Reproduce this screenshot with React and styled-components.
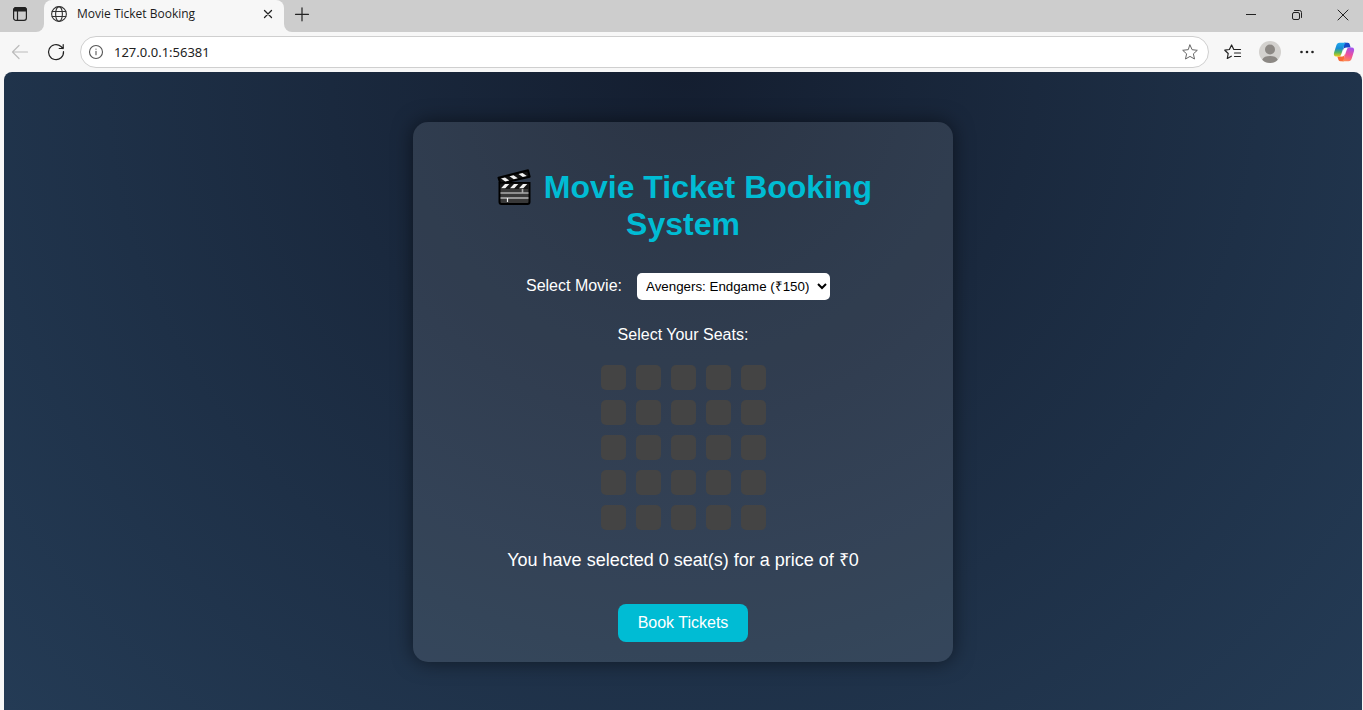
import React, { useState } from "react";
import styled, { createGlobalStyle } from "styled-components";

const GlobalStyle = createGlobalStyle`
  *, *::before, *::after { box-sizing: border-box; }
  body {
    margin: 0;
    background: #f7f7f7;
    font-family: "Liberation Sans", Arial, sans-serif;
  }
  button, input, select { font-family: inherit; }
`;

const Window = styled.div`
  display: flex;
  flex-direction: column;
  min-height: 100vh;
`;

const TabStrip = styled.header`
  display: flex;
  height: 32px;
  color: #111;
`;

const StripStart = styled.div`
  display: flex;
  align-items: center;
  width: 44px;
  padding: 0 0 4px 12px;
  background: #cdcdcd;
  border-bottom-right-radius: 8px;
`;

const StripEnd = styled.div`
  display: flex;
  flex: 1;
  align-items: center;
  justify-content: space-between;
  padding: 0 0 2px 10px;
  background: #cdcdcd;
  border-bottom-left-radius: 8px;
`;

const TabSlot = styled.div`
  width: 240px;
  background: linear-gradient(#cdcdcd 50%, #f7f7f7 50%);
`;

const Tab = styled.div`
  display: flex;
  align-items: center;
  gap: 10px;
  height: 32px;
  padding: 0 8px 4px 7px;
  background: #f7f7f7;
  border-radius: 8px 8px 0 0;
`;

const TabTitle = styled.span`
  flex: 1;
  font: 12px/16px "Open Sans", "Noto Sans", sans-serif;
  color: #1b1b1b;
`;

const IconButton = styled.button`
  display: inline-flex;
  align-items: center;
  justify-content: center;
  flex: none;
  width: ${(p) => p.$size || 16}px;
  height: ${(p) => p.$size || 16}px;
  padding: 0;
  border: 0;
  background: none;
  color: ${(p) => p.$color || "#222"};
`;

const WindowControls = styled.div`
  display: flex;
  gap: 30px;
  padding-right: 12px;
`;

const Toolbar = styled.div`
  display: flex;
  align-items: center;
  height: 40px;
  padding: 0 8px 0 10px;
  gap: 16px;
`;

const AddressBar = styled.div`
  display: flex;
  flex: 1;
  align-items: center;
  gap: 10px;
  height: 32px;
  min-width: 0;
  margin: 0 -2px;
  padding: 0 10px 0 7px;
  border: 1px solid #cfcfcf;
  border-radius: 16px;
  background: #fff;
`;

const AddressInput = styled.input`
  flex: 1;
  min-width: 0;
  padding: 0;
  border: 0;
  outline: 0;
  background: none;
  color: #222;
  font: 13px/18px "Noto Sans", "Open Sans", sans-serif;
`;

const Page = styled.main`
  flex: 1;
  margin: 0 1px 0 4px;
  padding: 50px 16px 40px;
  border-radius: 8px 8px 0 0;
  background: radial-gradient(circle at top, #141e30, #243b55);
  color: #fff;
`;

const Card = styled.form`
  display: flex;
  flex-direction: column;
  align-items: center;
  max-width: 540px;
  margin: 0 auto;
  padding: 20px;
  border-radius: 15px;
  background: rgba(255, 255, 255, 0.1);
  box-shadow: 0 0 20px rgba(0, 0, 0, 0.5);
  text-align: center;
`;

const Title = styled.h1`
  max-width: 400px;
  margin: 27px 0 30px;
  color: #00bcd4;
  font-size: 32px;
  line-height: 37px;

  svg {
    margin: 0 3px;
    vertical-align: -8px;
  }
`;

const MovieField = styled.div`
  display: flex;
  align-items: flex-start;
  gap: 15px;
  padding-right: 10px;
  font-size: 16px;
  line-height: 25px;
`;

const MovieSelect = styled.select`
  width: 193px;
  height: 27px;
  padding: 5px;
  border: 0;
  border-radius: 5px;
  background: #fff;
  color: #000;
`;

const SeatGroup = styled.fieldset`
  display: flex;
  flex-direction: column;
  align-items: center;
  min-width: 0;
  margin: 26px 0 20px;
  padding: 0;
  border: 0;
`;

const SeatLegend = styled.legend`
  margin: 0 auto 21px;
  padding: 0;
  font-size: 16px;
  line-height: 18px;
`;

const SeatGrid = styled.div`
  display: grid;
  grid-template-columns: repeat(5, 25px);
  gap: 10px;
`;

const Seat = styled.input`
  appearance: none;
  width: 25px;
  height: 25px;
  margin: 0;
  border-radius: 5px;
  background: #444;
  cursor: pointer;

  &:checked { background: #00bcd4; }
`;

const Summary = styled.p`
  margin: 0 0 34px;
  font-size: 18px;
  line-height: 20px;
`;

const BookButton = styled.button`
  padding: 10px 20px;
  border: 0;
  border-radius: 8px;
  background: #00bcd4;
  color: #fff;
  font-size: 16px;
  line-height: 18px;
  cursor: pointer;
`;

const Line = ({ size = 16, width = 1.1, children, ...rest }) => (
  <svg width={size} height={size} viewBox={`0 0 ${size} ${size}`} fill="none" stroke="currentColor"
    strokeWidth={width} strokeLinecap="round" strokeLinejoin="round" aria-hidden="true" {...rest}>
    {children}
  </svg>
);

const STAR = "M8 1 L10.1 5.7 L15.3 6.3 L11.4 9.8 L12.5 15 L8 12.4 L3.5 15 L4.6 9.8 L.7 6.3 L5.9 5.7 Z";

const TabActionsIcon = () => (
  <Line width={1.2}>
    <rect x="1.6" y="1.6" width="12.8" height="12.8" rx="2.4" />
    <path d="M1.600 5V4A2.400 2.400 0 0 1 4 1.600h8A2.400 2.400 0 0 1 14.400 4v1z" fill="currentColor" />
    <path d="M5.500 5v9" />
  </Line>
);

const GlobeIcon = () => (
  <Line width={1.1} color="#333">
    <circle cx="8" cy="8" r="7.4" />
    <ellipse cx="8" cy="8" rx="3.4" ry="7.4" />
    <path d="M1.2 5.5h13.6M1.2 10.5h13.6" />
  </Line>
);

const ClapperIcon = () => (
  <svg width="35" height="37" viewBox="0 0 35 37" role="img" aria-label="Clapper board">
    <path d="M2.500 14h30v19a2 2 0 0 1-2 2h-26a2 2 0 0 1-2-2z" fill="#383838" stroke="#000" strokeWidth="2" />
    <path d="M1.500 8.800 31 1.200l1.700 6.500L3.300 14.500z" fill="#151515" stroke="#000" strokeWidth="2" strokeLinejoin="round" />
    <path d="M4 9.500l4-1 4.300 3-4 1zM12.500 7.200l4-1 4.300 3-4 1zM21.500 5l4-1 4.300 3-4 1z" fill="#f2f2f2" />
    <path d="M3.500 14.500h28V20h-28z" fill="#151515" />
    <path d="M8 15h4.300l-4 4.200H4zM17 15h4.300l-4 4.200H13zM26 15h4.300l-4 4.200H22z" fill="#f2f2f2" />
    <path d="M3.500 24h28M25.500 20v4" stroke="#aaa" strokeWidth="1.600" />
    <path d="M3.500 29h28M10.500 29v4" stroke="#f4f4f4" strokeWidth="1.200" />
  </svg>
);

const CopilotIcon = () => (
  <svg width="24" height="22" viewBox="0 0 24 22" aria-hidden="true">
    <defs>
      <linearGradient id="cool" x1="0" y1="0" x2="0" y2="1">
        <stop offset="0" stopColor="#22a9ee" />
        <stop offset=".4" stopColor="#168bd5" />
        <stop offset=".7" stopColor="#57b65f" />
        <stop offset="1" stopColor="#f2cf10" />
      </linearGradient>
      <linearGradient id="warm" x1=".6" y1="0" x2=".3" y2="1">
        <stop offset="0" stopColor="#a453ed" />
        <stop offset=".5" stopColor="#ee4f9b" />
        <stop offset="1" stopColor="#ff8d50" />
      </linearGradient>
    </defs>
    <path d="M12 1h4c1.600 0 2 1 2.400 2.300l.8 2.900h-4.500c-2 0-3 1.300-3.500 3z" fill="#1748c7" />
    <path d="M12 21H8c-1.600 0-2-1-2.400-2.300l-.9-2.900h4.600c2 0 3-1.300 3.500-3z" fill="#f86a35" />
    <path d="M7 1h8c-1.800 0-2.300 1.400-2.800 3L9 13.400c-.6 1.800-1.400 2.600-3.100 2.600H3.600C1 16 .5 13.800 1.200 11.500L3.600 4C4.300 2 5.200 1 7 1z" fill="url(#cool)" />
    <path d="M17 21H9c1.800 0 2.300-1.400 2.800-3L15 8.600C15.600 6.800 16.400 6 18.100 6h2.300c2.600 0 3.100 2.200 2.400 4.500L20.400 18c-.7 2-1.600 3-3.400 3z" fill="url(#warm)" />
    <path d="M12.700 6.500h2.800L11.300 15.500H8.700z" fill="#fff" />
  </svg>
);

const AvatarIcon = () => (
  <svg width="22" height="22" viewBox="0 0 22 22" aria-hidden="true">
    <circle cx="11" cy="11" r="11" fill="#d3d1ce" />
    <circle cx="11" cy="8.500" r="5" fill="#8c8884" />
    <path d="M3.200 18.700C4.500 16 7 15 11 15s6.500 1 7.800 3.700A11 11 0 0 1 11 22a11 11 0 0 1-7.800-3.300z" fill="#8c8884" />
  </svg>
);

const movies = [
  { name: "Avengers: Endgame", price: 150 },
  { name: "Joker", price: 200 },
  { name: "Toy Story 4", price: 180 },
];

function BrowserChrome() {
  return (
    <>
      <TabStrip>
        <StripStart>
          <IconButton aria-label="Tab actions"><TabActionsIcon /></IconButton>
        </StripStart>
        <TabSlot>
          <Tab>
            <GlobeIcon />
            <TabTitle>Movie Ticket Booking</TabTitle>
            <IconButton aria-label="Close tab">
              <Line width={1.3}><path d="M4.500 4.500l7 7M11.500 4.500l-7 7" /></Line>
            </IconButton>
          </Tab>
        </TabSlot>
        <StripEnd>
          <IconButton aria-label="New tab">
            <Line width={1.2}><path d="M8 .8v13M1.500 7.300h13" /></Line>
          </IconButton>
          <WindowControls>
            <IconButton aria-label="Minimize">
              <Line width={1} strokeLinecap="butt"><path d="M3 7.500h10" /></Line>
            </IconButton>
            <IconButton aria-label="Restore">
              <Line width={1}>
                <rect x="3.500" y="5.500" width="7" height="7" rx="1.500" />
                <path d="M5.500 3.500h5a2 2 0 0 1 2 2v5" />
              </Line>
            </IconButton>
            <IconButton aria-label="Close">
              <Line width={1}><path d="M3 3l10 10M13 3L3 13" /></Line>
            </IconButton>
          </WindowControls>
        </StripEnd>
      </TabStrip>
      <Toolbar>
        <IconButton $size={20} $color="#bcbcbc" aria-label="Back">
          <Line size={20} width={1.200}><path d="M17.500 10H2.500M9 3.500L2.500 10 9 16.500" /></Line>
        </IconButton>
        <IconButton $size={20} aria-label="Refresh">
          <Line size={20} width={1.200}><path d="M17.500 9.500A7.500 7.500 0 1 1 15 4.500l2 2M17.200 2.500v4h-4" /></Line>
        </IconButton>
        <AddressBar>
          <IconButton aria-label="Site information">
            <Line color="#555"><circle cx="8" cy="8" r="6.500" /><path d="M8 7.300v3.500M8 5v.3" /></Line>
          </IconButton>
          <AddressInput aria-label="Address" defaultValue="127.0.0.1:56381" />
          <IconButton $color="#666" aria-label="Add to favorites">
            <Line width={1}><path d={STAR} /></Line>
          </IconButton>
        </AddressBar>
        <IconButton $size={20} aria-label="Favorites">
          <Line size={20} width={1.200}>
            <path d="M17.500 7.500h-6.700L8.600 3 6.400 7.500 1.800 8.200l3.400 3.300-.9 5 4-2.300M11.500 11h6M11.500 14.500h6" />
          </Line>
        </IconButton>
        <IconButton $size={22} aria-label="Profile"><AvatarIcon /></IconButton>
        <IconButton $size={20} aria-label="Settings and more">
          <svg width="20" height="20" viewBox="0 0 20 20" fill="currentColor" aria-hidden="true">
            <circle cx="4.500" cy="10" r="1.300" /><circle cx="10" cy="10" r="1.300" /><circle cx="15.500" cy="10" r="1.300" />
          </svg>
        </IconButton>
        <IconButton $size={22} aria-label="Copilot"><CopilotIcon /></IconButton>
      </Toolbar>
    </>
  );
}

export default function App() {
  const [movie, setMovie] = useState(0);
  const [seats, setSeats] = useState(() => Array(25).fill(false));
  const count = seats.filter(Boolean).length;
  const toggle = (index) => setSeats(seats.map((on, i) => (i === index ? !on : on)));

  return (
    <Window>
      <GlobalStyle />
      <BrowserChrome />
      <Page>
        <Card onSubmit={(e) => e.preventDefault()}>
          <Title><ClapperIcon /> Movie Ticket Booking System</Title>
          <MovieField>
            <label htmlFor="movie">Select Movie:</label>
            <MovieSelect id="movie" value={movie} onChange={(e) => setMovie(Number(e.target.value))}>
              {movies.map((m, i) => (
                <option key={m.name} value={i}>{`${m.name} (₹${m.price})`}</option>
              ))}
            </MovieSelect>
          </MovieField>
          <SeatGroup>
            <SeatLegend>Select Your Seats:</SeatLegend>
            <SeatGrid>
              {seats.map((on, i) => (
                <Seat key={i} type="checkbox" aria-label={`Seat ${i + 1}`} checked={on} onChange={() => toggle(i)} />
              ))}
            </SeatGrid>
          </SeatGroup>
          <Summary>{`You have selected ${count} seat(s) for a price of ₹${count * movies[movie].price}`}</Summary>
          <BookButton type="submit">Book Tickets</BookButton>
        </Card>
      </Page>
    </Window>
  );
}
